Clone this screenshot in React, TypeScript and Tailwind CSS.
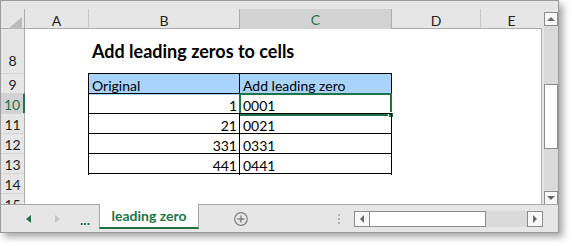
const font = "font-['Lato','Liberation_Sans',sans-serif]";
const cols = 'grid grid-cols-[24px_63px_151px_153px_88px_62px]';

const rows = [
  { n: 9, b: 'Original', c: 'Add leading zero', head: true },
  { n: 10, b: '1', c: '0001' },
  { n: 11, b: '21', c: '0021' },
  { n: 12, b: '331', c: '0331' },
  { n: 13, b: '441', c: '0441' },
];

function Tri({ dir, color, w = 5, h = 8 }: { dir: 'l' | 'r' | 'u' | 'd'; color: string; w?: number; h?: number }) {
  const pts =
    dir === 'l'
      ? `${w},0 ${w},${h} 0,${h / 2}`
      : dir === 'r'
        ? `0,0 0,${h} ${w},${h / 2}`
        : dir === 'u'
          ? `0,${h} ${w},${h} ${w / 2},0`
          : `0,0 ${w},0 ${w / 2},${h}`;
  return (
    <svg width={w} height={h} viewBox={`0 0 ${w} ${h}`}>
      <polygon points={pts} fill={color} />
    </svg>
  );
}

function RowHead({ n, selected, bottom }: { n: number; selected?: boolean; bottom?: boolean }) {
  return (
    <div
      className={
        'flex justify-center text-[14px] border-t border-[#d4d4d4] ' +
        (bottom ? 'items-end pb-[2px] border-t-0 ' : 'items-center ') +
        (selected
          ? 'bg-[#d2d2d2] text-[#217346] border-r-2 border-r-[#217346]'
          : 'bg-[#e6e6e6] text-[#222] border-r border-r-[#ababab]')
      }
    >
      {n}
    </div>
  );
}

export default function App() {
  return (
    <div className={`w-[572px] h-[246px] bg-white ${font}`}>
      <div className="w-[559px] h-[233px] border border-[#9c9c9c] flex flex-col bg-[#e6e6e6] shadow-[4px_4px_7px_rgba(0,0,0,0.35)]">
        <div className="h-[203px] flex">
          <div className="w-[541px] flex flex-col">
            <div className="h-[8px]" />
            <div className={`${cols} h-[20px] border-b border-[#ababab] text-[14px] text-[#222]`}>
              <div className="border-r border-[#ababab] flex items-end justify-end pr-[2px] pb-[2px]">
                <svg width="14" height="12" viewBox="0 0 14 12">
                  <polygon points="14,0 14,12 0,12" fill="#bcbcbc" />
                </svg>
              </div>
              <div className="flex items-center justify-center">A</div>
              <div className="flex items-center justify-center border-l border-[#c6c6c6]">B</div>
              <div className="flex items-center justify-center border-x border-[#ababab] bg-[#d2d2d2] text-[#217346] border-b-2 border-b-[#217346] -mb-px">
                C
              </div>
              <div className="flex items-center justify-center">D</div>
              <div className="flex items-center justify-center border-l border-[#c6c6c6]">E</div>
            </div>
            <div className="flex-1 bg-white border-r border-[#ababab] overflow-hidden text-[14px] text-black">
              <div className={`${cols} h-[44px]`}>
                <RowHead n={8} bottom />
                <div />
                <div className="pl-[4px] pt-[13px] text-[18px] leading-none font-bold whitespace-nowrap">
                  Add leading zeros to cells
                </div>
              </div>
              {rows.map((r) => (
                <div key={r.n} className={`${cols} h-[20px]`}>
                  <RowHead n={r.n} selected={r.n === 10} />
                  <div />
                  <div
                    className={
                      'border-l border-t border-black flex items-end leading-[18px] whitespace-nowrap ' +
                      (r.head ? 'bg-[#a8d3fb] pl-[3px]' : 'justify-end pr-[2px]')
                    }
                  >
                    {r.b}
                  </div>
                  <div
                    className={
                      'relative border-x border-t border-black flex items-end leading-[18px] pl-[3px] whitespace-nowrap ' +
                      (r.head ? 'bg-[#a8d3fb]' : '')
                    }
                  >
                    {r.c}
                    {r.n === 10 && (
                      <div className="absolute -left-px -top-px -right-px -bottom-px border-2 border-[#217346]">
                        <div className="absolute -right-[4px] -bottom-[4px] w-[6px] h-[6px] bg-[#217346] border border-white" />
                      </div>
                    )}
                  </div>
                </div>
              ))}
              {[14, 15].map((n) => (
                <div key={n} className={`${cols} h-[20px]`}>
                  <RowHead n={n} />
                  <div />
                  <div className={n === 14 ? 'border-t border-black' : ''} />
                  <div className={n === 14 ? 'border-t border-black' : ''} />
                </div>
              ))}
            </div>
          </div>
          <div className="w-[16px] pl-[2px] pt-[11px] flex flex-col">
            <div className="h-[14px] bg-[#f8f8f8] border border-[#8c8c8c] flex items-center justify-center">
              <Tri dir="u" color="#6a6a6a" w={8} h={4} />
            </div>
            <div className="flex-1 bg-[#dadada] pt-[58px]">
              <div className="h-[65px] bg-white border border-[#8c8c8c]" />
            </div>
            <div className="h-[14px] -mb-px bg-[#f8f8f8] border border-[#8c8c8c] flex items-center justify-center">
              <Tri dir="d" color="#6a6a6a" w={8} h={4} />
            </div>
          </div>
        </div>
        <div className="h-[28px] border-t border-[#a6a6a6] flex items-center">
          <div className="w-[98px] flex items-center">
            <div className="ml-[25px]">
              <Tri dir="l" color="#217346" />
            </div>
            <div className="ml-[24px]">
              <Tri dir="r" color="#c4c4c4" />
            </div>
            <div className="ml-[20px] text-[14px] font-bold text-[#217346] leading-none pt-[2px]">...</div>
          </div>
          <div className="self-start -mt-px w-[100px] h-[25px] bg-white border-x border-[#a6a6a6] border-b-2 border-b-[#217346] flex items-center justify-center text-[14px] font-bold text-[#217346]">
            leading zero
          </div>
          <div className="ml-[35px]">
            <svg width="14" height="14" viewBox="0 0 14 14">
              <circle cx="7" cy="7" r="6.3" fill="none" stroke="#808080" strokeWidth="1.2" />
              <path d="M7 3.5v7M3.5 7h7" stroke="#808080" strokeWidth="1.4" />
            </svg>
          </div>
          <div className="ml-[90px] flex flex-col gap-[2px]">
            <div className="w-[2px] h-[2px] bg-[#b4b4b4]" />
            <div className="w-[2px] h-[2px] bg-[#b4b4b4]" />
            <div className="w-[2px] h-[2px] bg-[#b4b4b4]" />
          </div>
          <div className="ml-[14px] h-[16px] flex">
            <div className="w-[16px] bg-[#f8f8f8] border border-[#8c8c8c] flex items-center justify-center">
              <Tri dir="l" color="#6a6a6a" w={4} h={8} />
            </div>
            <div className="w-[116px] bg-white border border-l-0 border-[#8c8c8c]" />
            <div className="w-[41px] bg-[#dadada]" />
            <div className="w-[16px] bg-[#f8f8f8] border border-[#8c8c8c] flex items-center justify-center">
              <Tri dir="r" color="#6a6a6a" w={4} h={8} />
            </div>
          </div>
        </div>
      </div>
    </div>
  );
}
